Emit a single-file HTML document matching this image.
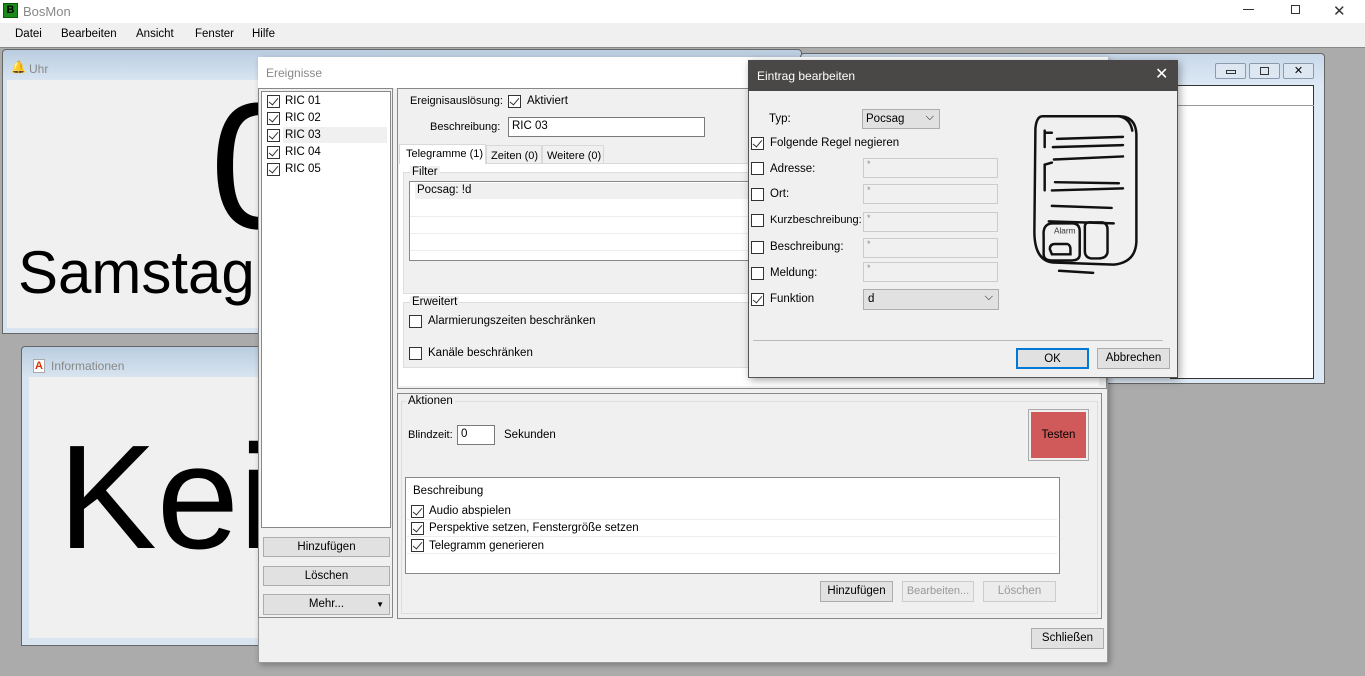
<!DOCTYPE html>
<html><head><meta charset="utf-8"><style>
*{box-sizing:border-box;margin:0;padding:0}
body{width:1365px;height:676px;overflow:hidden;background:#ababab;font-family:"Liberation Sans",sans-serif;font-size:11.5px;color:#000;position:relative}
.a{position:absolute;white-space:nowrap}
.cb{position:absolute;width:13px;height:13px;border:1px solid #333;background:#fff}
.cb.c::after{content:"";position:absolute;left:3px;top:0px;width:4px;height:8px;border:solid #333;border-width:0 1.5px 1.5px 0;transform:rotate(40deg)}
.btn{position:absolute;border:1px solid #adadad;background:#e1e1e1;text-align:center;font-size:11.5px;white-space:nowrap}
.inp{position:absolute;border:1px solid #7a7a7a;background:#fff}
.dis{position:absolute;border:1px solid #ccc;background:#f0f0f0;color:#888;font-size:9px;padding-left:3px}
</style></head><body>
<div class="a" style="left:0;top:0;width:1365px;height:23px;background:#fff"></div>
<div class="a" style="left:3px;top:3px;width:15px;height:15px;background:#1a8a1a;border:1px solid #0a5a0a;color:#000;font-size:11px;font-weight:bold;text-align:center;line-height:13px">B</div>
<div class="a" style="left:23px;top:4px;color:#888;font-size:13px">BosMon</div>
<div class="a" style="left:1243px;top:9px;width:11px;height:1px;background:#333"></div>
<div class="a" style="left:1291px;top:5px;width:9px;height:9px;border:1px solid #333"></div>
<div class="a" style="left:1333px;top:2px;font-size:15px;color:#333">✕</div>
<div class="a" style="left:0;top:23px;width:1365px;height:24px;background:#f0f0f0"></div>
<div class="a" style="left:15px;top:28px">Datei</div>
<div class="a" style="left:61px;top:28px">Bearbeiten</div>
<div class="a" style="left:136px;top:28px">Ansicht</div>
<div class="a" style="left:195px;top:28px">Fenster</div>
<div class="a" style="left:252px;top:28px">Hilfe</div>
<div class="a" style="left:0;top:47px;width:1365px;height:1px;background:#888"></div>

<div class="a" style="left:2px;top:49px;width:800px;height:285px;border:1px solid #666;background:linear-gradient(#b9cde0,#d8e4f0 30px);border-radius:4px 4px 0 0"></div>
<div class="a" style="left:11px;top:60px;font-size:12px;color:#e0a800">🔔</div>
<div class="a" style="left:29px;top:62px;color:#888;font-size:12px">Uhr</div>
<div class="a" style="left:7px;top:80px;width:795px;height:248px;background:#f0f0f0"></div>
<div class="a" style="left:210px;top:82px;font-size:180px;line-height:170px">0</div>
<div class="a" style="left:18px;top:240px;font-size:60px;line-height:66px">Samstag,</div>

<div class="a" style="left:21px;top:346px;width:250px;height:300px;border:1px solid #666;background:linear-gradient(#b9cde0,#d8e4f0 30px);border-radius:4px 0 0 0"></div>
<div class="a" style="left:33px;top:359px;width:12px;height:14px;background:#fff;border:1px solid #aaa;color:#e03000;font-size:11px;font-weight:bold;line-height:12px;text-align:center">A</div>
<div class="a" style="left:51px;top:359px;color:#888;font-size:12px">Informationen</div>
<div class="a" style="left:29px;top:377px;width:245px;height:261px;background:#f0f0f0"></div>
<div class="a" style="left:58px;top:418px;font-size:148px;line-height:160px">Kei</div>

<div class="a" style="left:800px;top:53px;width:525px;height:331px;border:1px solid #666;background:linear-gradient(#c8d8ea,#dce8f4 30px);border-radius:4px 4px 0 0"></div>
<div class="a" style="left:1215px;top:63px;width:31px;height:16px;border:1px solid #8a9ab0;background:#dde7f2;border-radius:2px"><div class="a" style="left:10px;top:6px;width:10px;height:4px;border:1px solid #333"></div></div>
<div class="a" style="left:1249px;top:63px;width:31px;height:16px;border:1px solid #8a9ab0;background:#dde7f2;border-radius:2px"><div class="a" style="left:10px;top:3px;width:9px;height:8px;border:1px solid #333"></div></div>
<div class="a" style="left:1283px;top:63px;width:31px;height:16px;border:1px solid #8a9ab0;background:#dde7f2;border-radius:2px;text-align:center;font-size:11px;line-height:14px">✕</div>
<div class="a" style="left:1170px;top:85px;width:144px;height:294px;border:1px solid #333;background:#fff"></div>
<div class="a" style="left:1170px;top:105px;width:144px;height:1px;background:#999"></div>

<div class="a" style="left:258px;top:57px;width:850px;height:606px;background:#f0f0f0;border:1px solid #999;box-shadow:2px 2px 6px rgba(0,0,0,.3)"></div>
<div class="a" style="left:258px;top:57px;width:850px;height:31px;background:#fff"></div>
<div class="a" style="left:266px;top:66px;color:#888;font-size:12px">Ereignisse</div>
<div class="a" style="left:258px;top:88px;width:135px;height:530px;border:1px solid #888"></div>
<div class="a" style="left:261px;top:91px;width:130px;height:437px;border:1px solid #888;background:#fff"></div>
<div class="a" style="left:283px;top:127px;width:104px;height:16px;background:#f0f0f0"></div>
<div class="cb c" style="left:267px;top:95px"></div><div class="a" style="left:285px;top:95px">RIC 01</div>
<div class="cb c" style="left:267px;top:112px"></div><div class="a" style="left:285px;top:112px">RIC 02</div>
<div class="cb c" style="left:267px;top:129px"></div><div class="a" style="left:285px;top:129px">RIC 03</div>
<div class="cb c" style="left:267px;top:146px"></div><div class="a" style="left:285px;top:146px">RIC 04</div>
<div class="cb c" style="left:267px;top:163px"></div><div class="a" style="left:285px;top:163px">RIC 05</div>
<div class="btn" style="left:263px;top:537px;width:127px;height:20px;line-height:18px">Hinzufügen</div>
<div class="btn" style="left:263px;top:566px;width:127px;height:20px;line-height:18px">Löschen</div>
<div class="btn" style="left:263px;top:594px;width:127px;height:21px;line-height:19px">Mehr...<span style="position:absolute;right:5px;font-size:8px">▼</span></div>

<div class="a" style="left:397px;top:88px;width:710px;height:301px;border:1px solid #888"></div>
<div class="a" style="left:410px;top:95px;font-size:11px">Ereignisauslösung:</div>
<div class="cb c" style="left:508px;top:95px"></div>
<div class="a" style="left:527px;top:95px">Aktiviert</div>
<div class="a" style="left:430px;top:121px;font-size:11px">Beschreibung:</div>
<div class="inp" style="left:508px;top:117px;width:197px;height:20px;padding:2px 3px">RIC 03</div>
<div class="a" style="left:399px;top:163px;width:700px;height:1px;background:#d9d9d9"></div>
<div class="a" style="left:399px;top:144px;width:87px;height:21px;background:#fff;border:1px solid #d9d9d9;border-bottom:none;padding:3px 6px;font-size:11px">Telegramme (1)</div>
<div class="a" style="left:486px;top:145px;width:56px;height:19px;background:#f0f0f0;border:1px solid #d9d9d9;padding:4px 4px;font-size:11px">Zeiten (0)</div>
<div class="a" style="left:542px;top:145px;width:62px;height:19px;background:#f0f0f0;border:1px solid #d9d9d9;padding:4px 4px;font-size:11px">Weitere (0)</div>
<div class="a" style="left:399px;top:164px;width:700px;height:222px;background:#fff"></div>
<div class="a" style="left:403px;top:172px;width:696px;height:122px;border:1px solid #ddd;background:#f0f0f0"></div>
<div class="a" style="left:410px;top:166px;background:#f0f0f0;padding:0 2px">Filter</div>
<div class="a" style="left:409px;top:181px;width:690px;height:80px;border:1px solid #888;background:#fff"></div>
<div class="a" style="left:415px;top:183px;width:684px;height:16px;background:#f0f0f0;padding:1px 2px">Pocsag: !d</div>
<div class="a" style="left:410px;top:216px;width:689px;height:1px;background:#eee"></div>
<div class="a" style="left:410px;top:233px;width:689px;height:1px;background:#eee"></div>
<div class="a" style="left:410px;top:250px;width:689px;height:1px;background:#eee"></div>
<div class="a" style="left:403px;top:302px;width:696px;height:66px;border:1px solid #ddd;background:#f0f0f0"></div>
<div class="a" style="left:410px;top:296px;background:#f0f0f0;padding:0 2px">Erweitert</div>
<div class="cb" style="left:409px;top:315px"></div><div class="a" style="left:428px;top:315px">Alarmierungszeiten beschränken</div>
<div class="cb" style="left:409px;top:347px"></div><div class="a" style="left:428px;top:347px">Kanäle beschränken</div>

<div class="a" style="left:397px;top:393px;width:705px;height:226px;border:1px solid #888"></div>
<div class="a" style="left:401px;top:401px;width:697px;height:213px;border:1px solid #ddd"></div>
<div class="a" style="left:406px;top:395px;background:#f0f0f0;padding:0 2px">Aktionen</div>
<div class="a" style="left:408px;top:429px;font-size:11px">Blindzeit:</div>
<div class="inp" style="left:457px;top:425px;width:38px;height:20px;padding:2px 3px">0</div>
<div class="a" style="left:504px;top:429px">Sekunden</div>
<div class="a" style="left:1028px;top:409px;width:61px;height:52px;border:1px solid #aaa;background:#f0f0f0"><div class="a" style="left:2px;top:2px;width:55px;height:46px;background:#d05a5a;text-align:center;line-height:46px">Testen</div></div>
<div class="a" style="left:405px;top:477px;width:655px;height:97px;border:1px solid #888;background:#fff"></div>
<div class="a" style="left:413px;top:485px">Beschreibung</div>
<div class="cb c" style="left:411px;top:505px"></div><div class="a" style="left:429px;top:505px">Audio abspielen</div>
<div class="a" style="left:407px;top:519px;width:650px;height:1px;background:#eee"></div>
<div class="cb c" style="left:411px;top:522px"></div><div class="a" style="left:429px;top:522px">Perspektive setzen,  Fenstergröße setzen</div>
<div class="a" style="left:407px;top:536px;width:650px;height:1px;background:#eee"></div>
<div class="cb c" style="left:411px;top:539px"></div><div class="a" style="left:429px;top:540px">Telegramm generieren</div>
<div class="a" style="left:407px;top:553px;width:650px;height:1px;background:#eee"></div>
<div class="btn" style="left:820px;top:581px;width:73px;height:21px;line-height:19px">Hinzufügen</div>
<div class="btn" style="left:902px;top:581px;width:72px;height:21px;line-height:19px;color:#999;border-color:#ccc;background:#ececec;font-size:11px">Bearbeiten...</div>
<div class="btn" style="left:983px;top:581px;width:73px;height:21px;line-height:19px;color:#999;border-color:#ccc;background:#ececec">Löschen</div>
<div class="btn" style="left:1031px;top:628px;width:73px;height:21px;line-height:19px">Schließen</div>

<div class="a" style="left:748px;top:60px;width:430px;height:318px;background:#f0f0f0;border:1px solid #555;box-shadow:2px 2px 8px rgba(0,0,0,.35)"></div>
<div class="a" style="left:748px;top:60px;width:430px;height:31px;background:#4a4846"></div>
<div class="a" style="left:757px;top:69px;color:#fff;font-size:12px">Eintrag bearbeiten</div>
<div class="a" style="left:1155px;top:64px;color:#fff;font-size:16px">✕</div>
<div class="a" style="left:769px;top:113px">Typ:</div>
<div class="a" style="left:862px;top:109px;width:78px;height:20px;border:1px solid #adadad;background:#e1e1e1;padding:3px 3px">Pocsag<span style="position:absolute;right:5px;top:1px;font-size:11px">⌵</span></div>
<div class="cb c" style="left:751px;top:137px"></div><div class="a" style="left:770px;top:137px">Folgende Regel negieren</div>
<div class="cb" style="left:751px;top:162px"></div><div class="a" style="left:770px;top:163px">Adresse:</div>
<div class="dis" style="left:863px;top:158px;width:135px;height:20px">*</div>
<div class="cb" style="left:751px;top:188px"></div><div class="a" style="left:770px;top:188px">Ort:</div>
<div class="dis" style="left:863px;top:184px;width:135px;height:20px">*</div>
<div class="cb" style="left:751px;top:214px"></div><div class="a" style="left:770px;top:214px;font-size:11px">Kurzbeschreibung:</div>
<div class="dis" style="left:863px;top:212px;width:135px;height:20px">*</div>
<div class="cb" style="left:751px;top:241px"></div><div class="a" style="left:770px;top:241px">Beschreibung:</div>
<div class="dis" style="left:863px;top:238px;width:135px;height:20px">*</div>
<div class="cb" style="left:751px;top:267px"></div><div class="a" style="left:770px;top:267px">Meldung:</div>
<div class="dis" style="left:863px;top:262px;width:135px;height:20px">*</div>
<div class="cb c" style="left:751px;top:293px"></div><div class="a" style="left:770px;top:293px">Funktion</div>
<div class="a" style="left:863px;top:289px;width:136px;height:21px;border:1px solid #adadad;background:#e1e1e1;padding:3px 4px">d<span style="position:absolute;right:5px;top:1px;font-size:11px">⌵</span></div>
<svg class="a" style="left:995px;top:108px" width="155" height="170" viewBox="0 0 150 165">
<g fill="none" stroke="#111" stroke-width="2.4" stroke-linecap="round">
<path d="M46 8 Q40 8 39 20 L38 120 Q38 148 56 150 L115 152 Q136 150 137 130 L137 25 Q136 8 120 8 Z"/>
<path d="M120 8 Q131 10 133 22"/>
<path d="M48 22 L48 38 M48 24 L55 24 M56 38 L124 36 M60 30 L124 28"/>
<path d="M48 55 L48 80 M48 55 L55 53 M57 50 L124 47 M55 80 L124 78 M58 72 L120 73"/>
<path d="M55 95 L113 97 M52 110 L115 112"/>
<path d="M47 124 Q46 112 56 112 L75 112 Q82 112 82 120 L82 142 Q82 148 74 148 L55 148 Q47 148 47 142 Z"/>
<path d="M87 115 Q87 110 94 111 L104 111 Q109 112 109 118 L109 140 Q108 146 100 146 L93 146 Q87 145 87 139 Z"/>
<path d="M53 137 Q53 132 58 132 L70 132 Q73 133 73 137 L73 142 L55 142 Z"/>
<path d="M62 158 L95 160"/>
</g>
<text x="57" y="122" font-family="Liberation Sans" font-size="8" fill="#333">Alarm</text>
</svg>
<div class="a" style="left:753px;top:340px;width:410px;height:1px;background:#bbb"></div>
<div class="btn" style="left:1016px;top:348px;width:73px;height:21px;line-height:18px;border:2px solid #0078d7">OK</div>
<div class="btn" style="left:1097px;top:348px;width:73px;height:21px;line-height:19px">Abbrechen</div>
</body></html>
